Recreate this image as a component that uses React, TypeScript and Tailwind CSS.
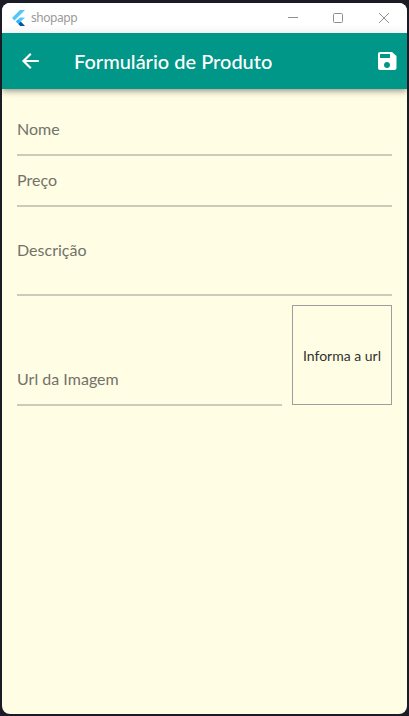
import React from "react";

function FlutterLogo() {
  return (
    <svg viewBox="0 0 13 16" className="h-4 w-[13px]">
      <path d="M8 0H13L2.5 10.4L0 8Z" fill="#54c5f8" />
      <path d="M8 7.4H13L8.8 11.6L6.3 9.1Z" fill="#54c5f8" />
      <path d="M3.8 11.6L6.3 9.1L8.8 11.6L6.3 14.1Z" fill="#29b6f6" />
      <path d="M6.3 14.1L8.8 11.6L13 16H8.2Z" fill="#01579b" />
    </svg>
  );
}

function TitleBar() {
  return (
    <div className="flex h-[30px] shrink-0 items-center bg-white pl-[10px] pr-[17px] text-[#999]">
      <FlutterLogo />
      <span className="ml-[6px] grow font-['Noto_Sans',sans-serif] text-[12px] leading-4 tracking-[-0.45px]">
        shopapp
      </span>
      <svg viewBox="0 0 104 12" className="h-3 w-[104px]" fill="none" stroke="#8f8f8f">
        <path d="M2 5.5H12" />
        <rect x="47.5" y="1.5" width="9" height="9" rx="1" />
        <path d="M93 1L103 11M103 1L93 11" />
      </svg>
    </div>
  );
}

function BackIcon() {
  return (
    <svg viewBox="0 0 24 24" className="h-6 w-6" fill="none" stroke="currentColor" strokeWidth="2.2">
      <path d="M20.8 12H6M12.8 4.7L5.5 12L12.8 19.3" />
    </svg>
  );
}

function SaveIcon() {
  return (
    <svg viewBox="0 0 24 24" className="h-6 w-6" fill="currentColor">
      <path
        fillRule="evenodd"
        d="M17 3H5C3.9 3 3 3.9 3 5V19C3 20.1 3.9 21 5 21H19.5C20.6 21 21.5 20.1 21.5 19V7L17 3ZM12 19C10.3 19 9 17.7 9 16S10.3 13 12 13S15 14.3 15 16S13.7 19 12 19ZM15 9H5V5H15V9Z"
      />
    </svg>
  );
}

function AppBar() {
  return (
    <header className="z-10 flex h-14 shrink-0 items-center bg-[#009688] pl-4 pr-2 text-white shadow-[0_2px_4px_-1px_rgba(0,0,0,0.2),0_4px_5px_0_rgba(0,0,0,0.14),0_1px_10px_0_rgba(0,0,0,0.12)]">
      <BackIcon />
      <h1 className="ml-8 grow text-[20px] font-medium leading-6">Formulário de Produto</h1>
      <SaveIcon />
    </header>
  );
}

function Field({ label, className }: { label: string; className: string }) {
  return (
    <div className={`border-b-2 border-[#cccab8] text-[16px] leading-5 tracking-[0.02px] text-[#73726a] ${className}`}>
      {label}
    </div>
  );
}

export default function App() {
  return (
    <div className="h-[716px] w-[409px] overflow-hidden bg-[#1b1b26] px-[2px] pt-[3px] font-['Lato',sans-serif]">
      <div className="flex h-[711px] w-[405px] flex-col overflow-hidden rounded-lg bg-[#fffde4]">
        <TitleBar />
        <AppBar />
        <main className="flex flex-col px-[15px] pt-[15px]">
          <Field label="Nome" className="h-[52px] pt-[15px]" />
          <Field label="Preço" className="h-[51px] pt-[14px]" />
          <Field label="Descrição" className="h-[89px] pt-[33px]" />
          <div className="mt-[9px] flex items-end gap-[10px]">
            <Field label="Url da Imagem" className="h-[51px] grow pt-[14px]" />
            <div className="mb-px flex h-[100px] w-[100px] items-center justify-center border border-[#9e9e9e] text-[14px] text-[#32322e]">
              Informa a url
            </div>
          </div>
        </main>
      </div>
    </div>
  );
}
